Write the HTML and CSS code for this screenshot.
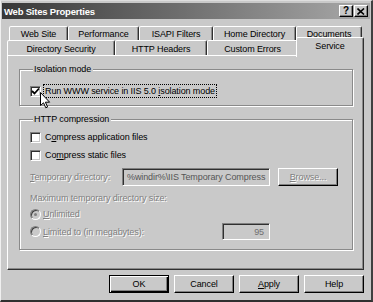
FILE: index.html
```html
<!DOCTYPE html>
<html>
<head>
<meta charset="utf-8">
<link rel="stylesheet" href="styles.css">
</head>
<body>
<div class="window">
  <div class="titlebar">
    <span class="title">Web Sites Properties</span>
    <div class="caption-btns">
      <span class="cbtn help">?</span>
      <span class="cbtn close"><svg width="8" height="7" viewBox="0 0 8 7"><path d="M0.5 0.5 L7 6.5 M7 0.5 L0.5 6.5" stroke="#000" stroke-width="1.6" fill="none"/></svg></span>
    </div>
  </div>

  <div class="tabrow back">
    <div class="tab t1">Web Site</div>
    <div class="tab t2">Performance</div>
    <div class="tab t3">ISAPI Filters</div>
    <div class="tab t4">Home Directory</div>
    <div class="tab t5">Documents</div>
  </div>
  <div class="tabrow front">
    <div class="tab f1">Directory Security</div>
    <div class="tab f2">HTTP Headers</div>
    <div class="tab f3">Custom Errors</div>
    <div class="tab f4 selected">Service</div>
  </div>

  <div class="panel">
    <div class="group g1">
      <div class="group-title">Isolation mode</div>
      <div class="row check-row first">
        <span class="box checked"><svg width="9" height="9" viewBox="0 0 9 9"><path d="M1 4 L3.5 6.5 L8 1.5" stroke="#000" stroke-width="1.8" fill="none"/></svg></span>
        <span class="focus">Run WWW service in IIS 5.0 <u>i</u>solation mode</span>
      </div>
    </div>

    <div class="group g2">
      <div class="group-title">HTTP compression</div>
      <div class="row check-row r1">
        <span class="box"></span>
        <span class="ctext">C<u>o</u>mpress application files</span>
      </div>
      <div class="row check-row r2">
        <span class="box"></span>
        <span class="ctext">Co<u>m</u>press static files</span>
      </div>
      <div class="row dir-row">
        <span class="dis dir-label"><u>T</u>emporary directory:</span>
        <span class="textbox dir-box">%windir%\IIS Temporary Compress</span>
        <span class="btn browse dis"><span><u>B</u>rowse...</span></span>
      </div>
      <div class="dis max-label">Maximum temporary directory size:</div>
      <div class="row radio-row unl">
        <span class="radio on"></span>
        <span class="dis"><u>U</u>nlimited</span>
      </div>
      <div class="row radio-row lim">
        <span class="lim-label">
          <span class="radio"></span>
          <span class="dis"><u>L</u>imited to (in megabytes):</span>
        </span>
        <span class="textbox num-box">95</span>
      </div>
    </div>
  </div>

  <div class="buttons">
    <span class="btn default">OK</span>
    <span class="btn">Cancel</span>
    <span class="btn"><span><u>A</u>pply</span></span>
    <span class="btn">Help</span>
  </div>

  <svg class="cursor" width="11" height="17" viewBox="0 0 11 17">
    <path d="M0.5 0.5 L0.5 13.5 L3.5 10.8 L5.8 15.8 L7.6 15 L5.4 10.2 L9.6 10.2 Z" fill="#fff" stroke="#000" stroke-width="1" stroke-linejoin="miter"/>
  </svg>
</div>
</body>
</html>
```

FILE: styles.css
```css
* { box-sizing: border-box; }

body {
  margin: 0;
  background: #c9c9c9;
  font-family: "Liberation Sans", Arial, sans-serif;
  font-size: 9px;
  letter-spacing: -0.1px;
  color: #000;
}

.window {
  position: relative;
  width: 373px;
  height: 302px;
  background: #c9c9c9;
  border-left: 1px solid #f0f0f0;
  border-top: 1px solid #dedede;
  border-right: 2px solid #404040;
  border-bottom: 2px solid #303030;
  padding: 2px 1px 0 1px;
  display: flex;
  flex-direction: column;
  overflow: hidden;
}

/* ---------- title bar ---------- */
.titlebar {
  height: 16px;
  flex: none;
  display: flex;
  align-items: center;
  justify-content: space-between;
  padding: 0 2px 0 2px;
  background: linear-gradient(to right, #383838 0%, #6a6a6a 45%, #a9a9a9 100%);
}

.title {
  color: #fff;
  font-weight: bold;
  font-size: 9.5px;
  letter-spacing: -0.2px;
}

.caption-btns {
  display: flex;
  gap: 1px;
}

.cbtn {
  width: 14px;
  height: 12px;
  background: #c9c9c9;
  border: 1px solid;
  border-color: #fff #000 #000 #fff;
  box-shadow: inset -1px -1px 0 #808080;
  display: flex;
  align-items: center;
  justify-content: center;
  font-weight: bold;
  font-size: 10px;
  line-height: 10px;
}

/* ---------- tabs ---------- */
.tabrow {
  display: flex;
  flex: none;
}

.back {
  margin: 7px 0 0 7px;
  height: 14px;
}

.front {
  margin-left: 5px;
  height: 15px;
}

.tab {
  border: 1px solid;
  border-bottom: none;
  border-color: #fff #303030 transparent #fff;
  border-radius: 2px 2px 0 0;
  box-shadow: inset -1px 0 0 #8a8a8a;
  background: #c9c9c9;
  display: flex;
  align-items: center;
  justify-content: center;
  padding-top: 1px;
  white-space: nowrap;
}

.t1 { width: 59px; }
.t2 { width: 71px; }
.t3 { width: 74px; }
.t4 { width: 83px; }
.t5 { width: 66px; }

.f1 { width: 108px; }
.f2 { width: 92px; }
.f3 { width: 91px; }
.f4 { width: 68px; }

.tab.selected {
  position: relative;
  z-index: 1;
  height: 20px;
  margin: -3px 0 -2px -2px;
  align-items: flex-start;
  padding-top: 3px;
}

/* ---------- panel ---------- */
.panel {
  flex: none;
  margin-left: 5px;
  width: 357px;
  height: 215px;
  border: 1px solid;
  border-color: #fff #303030 #303030 #fff;
  box-shadow: inset -1px -1px 0 #8a8a8a;
  padding: 13px 10px 0 11px;
}

.group {
  border: 1px solid #8a8a8a;
  box-shadow: inset 1px 1px 0 #fff, 1px 1px 0 #fff;
  padding: 0 8px 0 10px;
}

.group-title {
  width: max-content;
  margin: -7px 0 0 3px;
  padding: 0 2px 0 1px;
  background: #c9c9c9;
  line-height: 13px;
}

.g1 { padding-bottom: 7px; }
.g2 { margin-top: 13px; padding-bottom: 9px; }

.row {
  display: flex;
  align-items: center;
}

.check-row { height: 14px; }
.g1 .check-row { margin-top: 8px; }
.r1 { margin-top: 4px; }
.r2 { margin-top: 4px; }

.box {
  width: 11px;
  height: 11px;
  flex: none;
  background: #fff;
  border: 1px solid;
  border-color: #808080 #fff #fff #808080;
  box-shadow: inset 1px 1px 0 #303030, inset -1px -1px 0 #c9c9c9;
  display: flex;
  align-items: center;
  justify-content: center;
  margin-right: 2px;
}

.focus {
  border: 1px dotted #000;
  padding: 0 1px;
  line-height: 12px;
}

.ctext { padding-left: 2px; }

.dis {
  color: #808080;
  text-shadow: 1px 1px 0 #fff;
}

.dir-row {
  margin-top: 6px;
  height: 18px;
}

.dir-label { width: 92px; flex: none; }

.textbox {
  border: 1px solid;
  border-color: #808080 #fff #fff #808080;
  box-shadow: inset 1px 1px 0 #303030, inset -1px -1px 0 #c9c9c9;
  display: flex;
  align-items: center;
  color: #6a6a6a;
  white-space: nowrap;
  overflow: hidden;
}

.dir-box {
  width: 148px;
  height: 18px;
  padding: 0 4px;
  color: #555;
}

.btn {
  width: 60px;
  height: 18px;
  background: #c9c9c9;
  border: 1px solid;
  border-color: #fff #000 #000 #fff;
  box-shadow: inset -1px -1px 0 #808080;
  display: flex;
  align-items: center;
  justify-content: center;
  flex: none;
}

.browse { margin-left: 8px; }

.btn.default {
  border-color: #000;
  box-shadow: inset 1px 1px 0 #fff, inset -1px -1px 0 #000, inset -2px -2px 0 #808080;
}

.max-label {
  margin-top: 6px;
  line-height: 13px;
}

.radio-row { height: 14px; }
.unl { margin-top: 2px; }
.lim { margin-top: 2px; height: 17px; }

.radio {
  width: 11px;
  height: 11px;
  flex: none;
  border-radius: 50%;
  border: 1px solid;
  border-color: #808080 #fff #fff #808080;
  box-shadow: inset 1px 1px 0 #404040;
  background: #c9c9c9;
  margin-right: 2px;
  display: flex;
  align-items: center;
  justify-content: center;
}

.radio.on::after {
  content: "";
  width: 3px;
  height: 3px;
  border-radius: 50%;
  background: #808080;
}

.lim-label {
  width: 192px;
  flex: none;
  display: flex;
  align-items: center;
}

.num-box {
  width: 48px;
  height: 17px;
  justify-content: flex-end;
  padding-right: 5px;
  color: #707070;
}

/* ---------- bottom buttons ---------- */
.buttons {
  display: flex;
  justify-content: flex-end;
  gap: 5px;
  margin: 5px 6px 0 0;
}

.cursor {
  position: absolute;
  left: 39px;
  top: 91px;
}
```
